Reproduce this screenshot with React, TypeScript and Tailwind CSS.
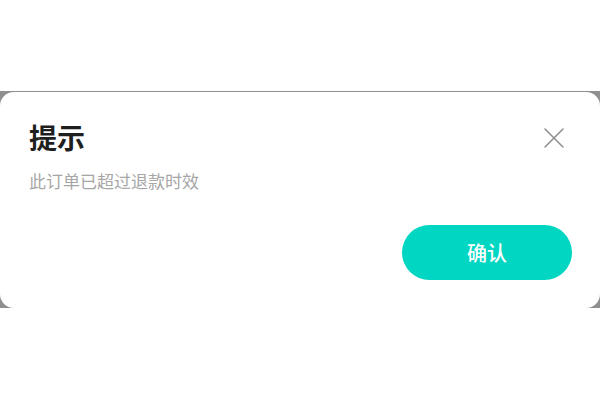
const cjk = { fontFamily: '"Noto Sans CJK SC", "Noto Sans", sans-serif' };

function CloseIcon() {
  return (
    <svg width="22" height="22" viewBox="0 0 22 22" fill="none" stroke="#909090" strokeWidth="1.6" strokeLinecap="round">
      <path d="M2 2 L20 20 M20 2 L2 20" />
    </svg>
  );
}

export default function App() {
  return (
    <div className="h-[400px] w-[600px] bg-white" style={cjk}>
      <div className="h-[91px]" />
      <div className="h-[217px] bg-[#8f8f8f] pt-px">
        <div className="flex h-full flex-col rounded-[14px] bg-white pl-[29px] pr-[28px]">
          <div className="flex items-center justify-between pt-[27px]">
            <h2 className="text-[28px] font-bold leading-[36px] text-[#1f1f1f]">提示</h2>
            <button className="mr-[7px] mt-[1px]">
              <CloseIcon />
            </button>
          </div>
          <p className="mt-[15px] text-[17px] leading-[22px] text-[#a6a6a6]">此订单已超过退款时效</p>
          <div className="mt-auto flex justify-end pb-[28px]">
            <button className="h-[55px] w-[170px] rounded-full bg-[#00d6c1] text-[20px] font-medium text-white">
              确认
            </button>
          </div>
        </div>
      </div>
    </div>
  );
}
